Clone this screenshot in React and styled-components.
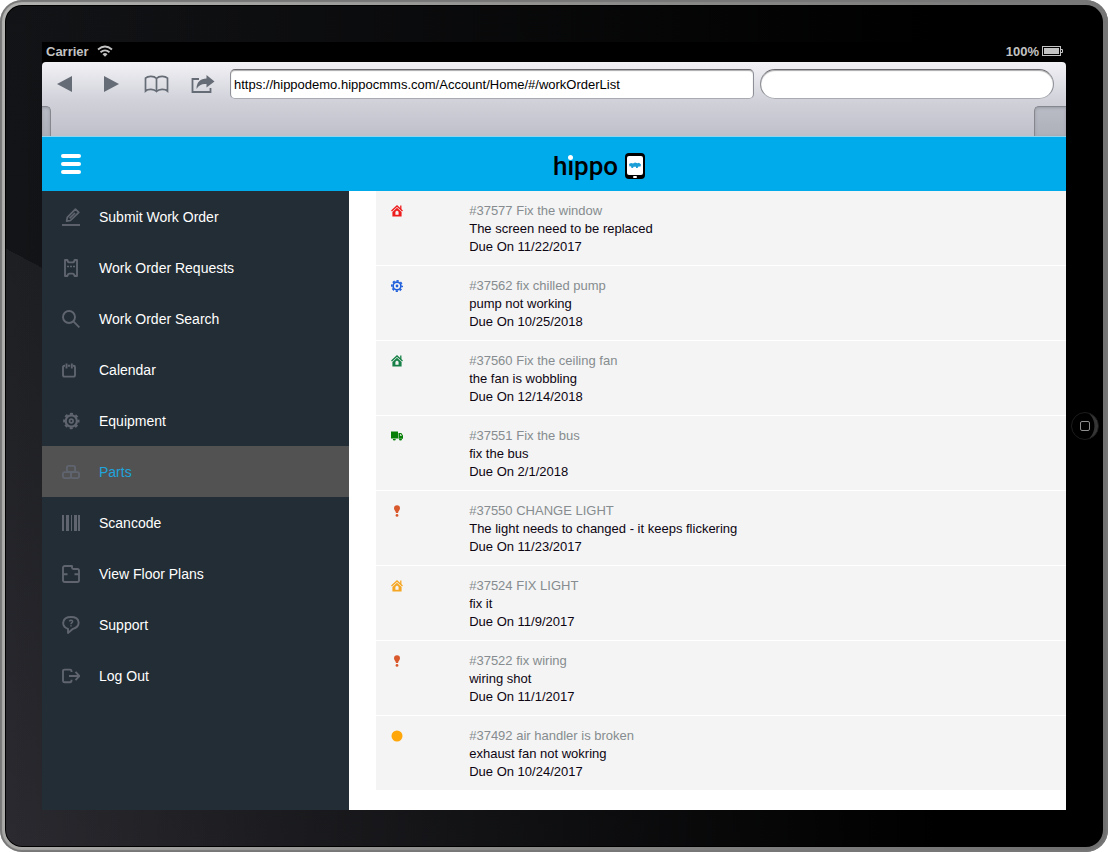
import React from "react";
import styled, { createGlobalStyle } from "styled-components";

const GlobalStyle = createGlobalStyle`
	*,
	*::before,
	*::after {
		box-sizing: border-box;
	}
	body {
		margin: 0;
		background: #fff;
		font-family: "Liberation Sans", Arial, sans-serif;
	}
`;

/* Tablet */

const Frame = styled.div`
	min-height: 100vh;
	display: flex;
	padding: 5px;
	border-radius: 22px;
	background: linear-gradient(100deg, #b2b2b0, #8c8c8b 50%, #6f6f6f);
	box-shadow: inset 0 0 1px 2px #777;
`;

const Bezel = styled.div`
	flex: 1;
	display: grid;
	grid-template-columns: 37px minmax(0, 1fr) 37px;
	grid-template-rows: 37px 1fr 37px;
	border-radius: 17px;
	background: linear-gradient(90deg, transparent, #000 85%),
		linear-gradient(28deg, #2a2a30 0%, #1e1f23 42%, #131417 42%, #111214 100%);
	box-shadow: 0 0 0 1px #000 inset;
`;

const Screen = styled.div`
	grid-area: 2 / 2;
	display: flex;
	flex-direction: column;
	background: #000;
`;

const HomeButton = styled.button`
	grid-area: 2 / 3;
	place-self: center;
	width: 28px;
	height: 28px;
	padding: 0;
	display: grid;
	place-items: center;
	border: 1px solid #1c1c1c;
	border-radius: 50%;
	background: radial-gradient(circle at 20% 50%, #000 68%, #333 72%, #444);

	&::before {
		content: "";
		width: 10px;
		height: 10px;
		border: 1px solid #8f8f8f;
		border-radius: 2px;
	}
`;

const StatusBar = styled.div`
	height: 20px;
	padding: 0 3px 2px 4px;
	display: flex;
	align-items: center;
	justify-content: space-between;
	color: #c3c3c3;
	font-size: 13px;
	font-weight: bold;
`;

const StatusGroup = styled.div`
	display: flex;
	align-items: center;
	gap: ${(props) => props.$gap};
`;

/* Browser */

const Browser = styled.div`
	display: flex;
	flex-direction: column;
	border-radius: 4px 4px 0 0;
	background: linear-gradient(#f2f2f6, #cfd0d8 55%, #bfc0ca);
`;

const Toolbar = styled.div`
	height: 44px;
	padding: 0 12px 0 0;
	display: flex;
	align-items: center;
`;

const ToolButton = styled.button`
	width: 46px;
	height: 30px;
	padding: 0;
	display: grid;
	place-items: center;
	border: 0;
	background: none;
	color: #666c75;
`;

const Fields = styled.div`
	flex: 1;
	display: grid;
	grid-template-columns: 16fr 9fr;
	gap: 6px;
	margin-left: 4px;
`;

const Field = styled.input`
	min-width: 0;
	height: 30px;
	padding: 0 3px;
	border: 1px solid #8d8f96;
	border-top-color: #6b6c71;
	border-bottom-color: #a9abb3;
	border-radius: ${(props) => (props.$round ? "15px" : "5px")};
	background: #fff;
	box-shadow: inset 0 1px 1px #aaa;
	color: #000;
	font: 13px "Liberation Sans", Arial, sans-serif;
`;

const Tabs = styled.div`
	height: 30px;
	display: flex;
	justify-content: space-between;
`;

const Tab = styled.div`
	width: ${(props) => (props.$last ? "32px" : "9px")};
	border: solid #85878f;
	border-width: ${(props) => (props.$last ? "1px 0 0 1px" : "1px 1px 0 0")};
	border-radius: ${(props) => (props.$last ? "5px 0 0 0" : "0 5px 0 0")};
	background: linear-gradient(#b9bbc5, #adafb9);
	box-shadow: inset 0 1px 3px #989aa3;
`;

/* App */

const Header = styled.header`
	height: 55px;
	display: flex;
	align-items: center;
	border-top: 1px solid #8fd5f0;
	background: #00abeb;
`;

const MenuButton = styled.button`
	width: 90px;
	height: 40px;
	padding: 0 0 0 19px;
	display: flex;
	flex-direction: column;
	justify-content: center;
	gap: 4px;
	border: 0;
	background: none;
`;

const Bar = styled.span`
	width: 20px;
	height: 4px;
	border-radius: 2px;
	background: #fff;
`;

const Logo = styled.div`
	flex: 1;
	padding-top: 3px;
	display: flex;
	align-items: center;
	justify-content: center;
	gap: 7px;
`;

const Wordmark = styled.span`
	color: #000;
	font: 500 26px/26px Roboto, sans-serif;
`;

const DottedLetter = styled.span`
	position: relative;

	&::after {
		content: "";
		position: absolute;
		top: 4px;
		left: 1px;
		width: 5px;
		height: 5px;
		border-radius: 50%;
		background: #fff;
		box-shadow: 0 0 0 1px #00abeb;
	}
`;

const Body = styled.div`
	flex: 1;
	display: flex;
`;

const Sidebar = styled.nav`
	width: 30%;
	background: #232d35;
`;

const MenuLink = styled.a`
	height: 51px;
	padding-left: 20px;
	display: flex;
	align-items: center;
	gap: 19px;
	background: ${(props) => (props.$active ? "#525252" : "transparent")};
	color: ${(props) => (props.$active ? "#1fa4dc" : "#fff")};
	font-size: 14px;
	text-decoration: none;

	svg {
		color: #5f646f;
	}
`;

const Content = styled.main`
	flex: 1;
	padding: 0 0 19px 27px;
	background: #fff;
`;

const OrderList = styled.ul`
	margin: 0;
	padding: 0;
	list-style: none;
`;

const Order = styled.li`
	padding: 11px 15px 9px;
	display: grid;
	grid-template-columns: 78px 1fr;
	border-bottom: 1px solid #fff;
	background: #f4f4f4;
	color: #0d0512;
	font-size: 13px;
	line-height: 18px;

	svg {
		margin-top: 3px;
	}
`;

const OrderTitle = styled.a`
	display: block;
	color: #868c8f;
	text-decoration: none;
`;

const OrderText = styled.div``;

/* Drawings */

const LineIcon = ({ children }) => (
	<svg
		width="18"
		height="18"
		viewBox="0 0 18 18"
		fill="none"
		stroke="currentColor"
		strokeWidth="1.9"
		strokeLinejoin="round"
		aria-hidden="true"
	>
		{children}
	</svg>
);

const menuIcons = {
	submit: (
		<>
			<path d="M0 17H18" />
			<path d="M4.6 13.2 5.3 9.4 13.4 1.1 16.8 4.3 8.5 12.5ZM7.6 10.3 13 5" strokeWidth="1.7" />
		</>
	),
	requests: (
		<>
			<path d="M3 1H5.4Q5.8 3.4 7.6 3.4H10.4Q12.2 3.4 12.6 1H15V17H12.6Q12.2 14.6 10.4 14.6H7.6Q5.8 14.6 5.4 17H3Z" />
			<path d="M5 7.5H13" strokeWidth="1.5" strokeDasharray="2 1" />
		</>
	),
	search: (
		<>
			<circle cx="7" cy="7" r="6" />
			<path d="M11.4 11.4 17.4 17.4" />
		</>
	),
	calendar: (
		<>
			<path d="M3 4.8H2.5Q1 4.8 1 6.3V14Q1 15.6 2.6 15.6H11.4Q13 15.6 13 14V6.3Q13 4.8 11.5 4.8H11M5.8 4.8H8.2" />
			<path d="M4.5 2.5V7.5M9.8 2.5V7.5" />
		</>
	),
	equipment: (
		<>
			<circle cx="9.3" cy="9" r="5.6" strokeWidth="2.2" />
			<circle cx="9.3" cy="9" r="7.2" strokeWidth="2" strokeDasharray="3 2.65" strokeDashoffset="1.5" />
			<circle cx="9.3" cy="9" r="1.8" strokeWidth="1.7" />
		</>
	),
	parts: (
		<>
			<rect x="4.9" y="2.9" width="8.2" height="6" rx="1.8" />
			<rect x="0.9" y="9.1" width="8.1" height="6" rx="1.8" />
			<rect x="9" y="9.1" width="8.1" height="6" rx="1.8" />
		</>
	),
	scancode: (
		<g fill="currentColor" stroke="none">
			<rect x="0" y="1" width="2" height="16" />
			<rect x="4" y="1" width="3" height="16" />
			<rect x="9" y="1" width="1" height="16" />
			<rect x="12" y="1" width="3" height="16" />
			<rect x="16" y="1" width="2" height="16" />
		</g>
	),
	plans: (
		<>
			<path d="M3 1H10V2.5Q10 4 11.5 4H15.5Q17 4 17 5.7V15.3Q17 17 15.5 17H2.7Q1 17 1 15.3V2.8Q1 1 3 1Z" />
			<path d="M1 9.3H5.5M12.5 9.3H17" />
		</>
	),
	support: (
		<>
			<path d="M6 17V12.8C-1 10.5-.5 1 9 1S19 10.5 11 12.8Z" />
			<path d="M7.2 5.2Q9 3.4 10.4 4.8C11.4 6.5 9 6.5 9 8.2M9 9.2V10.6" strokeWidth="1.5" />
		</>
	),
	logout: (
		<>
			<path d="M9.5 5V4.2Q9.5 2.6 8 2.6H2.6Q1 2.6 1 4.2V13.6Q1 15.2 2.6 15.2H8Q9.5 15.2 9.5 13.6V12.8" />
			<path d="M7 9H17.4M13.5 4.8 17.4 9 13.5 13.2" strokeLinejoin="miter" />
		</>
	),
};

const orderIcons = {
	house: (
		<>
			<path d="M.5 6 6 .9 11.5 6M9.8 .5V4" fill="none" stroke="currentColor" strokeWidth="1.3" />
			<path fillRule="evenodd" d="M6 2.8 10.6 7V11.6H1.400V7ZM4.400 6.800V9.800H7.600V6.800L6 5.400Z" />
		</>
	),
	gear: (
		<g fill="none" stroke="currentColor">
			<circle cx="6" cy="6" r="3.9" strokeWidth="1.7" />
			<circle cx="6" cy="6" r="5.2" strokeWidth="1.6" strokeDasharray="2.2 1.88" strokeDashoffset="1.1" />
			<circle cx="6" cy="6" r="1.4" fill="currentColor" stroke="none" />
		</g>
	),
	truck: (
		<path
			fillRule="evenodd"
			d="M0 1.5H7V8.5H0ZM7.500 3H10.300L12 5.400V8.800H7.500ZM9 4.200V5.800H11L9.900 4.200ZM1.800 9A1.500 1.500 0 1 0 4.800 9ZM8 9A1.500 1.500 0 1 0 11 9Z"
		/>
	),
	alert: (
		<>
			<path d="M3 3.2A3 3 0 0 1 9 3.2C9 5.200 7.400 5.600 7 8H5C4.600 5.600 3 5.200 3 3.200Z" />
			<circle cx="6" cy="10.4" r="1.4" />
		</>
	),
	dot: <circle cx="6" cy="6" r="5.5" />,
};

const menu = [
	{ icon: "submit", label: "Submit Work Order" },
	{ icon: "requests", label: "Work Order Requests" },
	{ icon: "search", label: "Work Order Search" },
	{ icon: "calendar", label: "Calendar" },
	{ icon: "equipment", label: "Equipment" },
	{ icon: "parts", label: "Parts", active: true },
	{ icon: "scancode", label: "Scancode" },
	{ icon: "plans", label: "View Floor Plans" },
	{ icon: "support", label: "Support" },
	{ icon: "logout", label: "Log Out" },
];

const orders = [
	{ id: 37577, title: "Fix the window", text: "The screen need to be replaced", due: "11/22/2017", icon: "house", color: "#ee1c1c" },
	{ id: 37562, title: "fix chilled pump", text: "pump not working", due: "10/25/2018", icon: "gear", color: "#1f5fdb" },
	{ id: 37560, title: "Fix the ceiling fan", text: "the fan is wobbling", due: "12/14/2018", icon: "house", color: "#178046" },
	{ id: 37551, title: "Fix the bus", text: "fix the bus", due: "2/1/2018", icon: "truck", color: "#088008" },
	{ id: 37550, title: "CHANGE LIGHT", text: "The light needs to changed - it keeps flickering", due: "11/23/2017", icon: "alert", color: "#d9592c" },
	{ id: 37524, title: "FIX LIGHT", text: "fix it", due: "11/9/2017", icon: "house", color: "#f5a623" },
	{ id: 37522, title: "fix wiring", text: "wiring shot", due: "11/1/2017", icon: "alert", color: "#d9592c" },
	{ id: 37492, title: "air handler is broken", text: "exhaust fan not wokring", due: "10/24/2017", icon: "dot", color: "#ffa60a" },
];

const BrowserChrome = () => (
	<Browser>
		<Toolbar>
			<ToolButton aria-label="Back">
				<svg width="16" height="18" fill="currentColor">
					<path d="M0 9 15 1V17Z" />
				</svg>
			</ToolButton>
			<ToolButton aria-label="Forward">
				<svg width="16" height="18" fill="currentColor">
					<path d="M16 9 1 1V17Z" />
				</svg>
			</ToolButton>
			<ToolButton aria-label="Bookmarks">
				<svg width="26" height="18" viewBox="0 0 26 18" fill="none" stroke="currentColor" strokeWidth="1.7">
					<path d="M12.500 3.500C10 .8 4 .8 1.500 3.200V16C4 13.800 10 13.800 12.500 16.500C15 13.800 21 13.800 23.500 16V3.200C21 .8 15 .8 12.500 3.500ZM12.500 3.500V16.500" />
				</svg>
			</ToolButton>
			<ToolButton aria-label="Share">
				<svg width="24" height="20" fill="none" stroke="currentColor" strokeWidth="1.8">
					<path d="M8 5H1.500V18H19.500V14" />
					<path d="M15.500 1 23.500 7.500 15.500 13.500V10C11 9.500 8 11 5.500 15C5.500 8 9.500 4.500 15.500 4.500Z" fill="currentColor" stroke="none" />
				</svg>
			</ToolButton>
			<Fields>
				<Field
					aria-label="Address"
					defaultValue="https://hippodemo.hippocmms.com/Account/Home/#/workOrderList"
				/>
				<Field $round type="search" aria-label="Search" />
			</Fields>
		</Toolbar>
		<Tabs>
			<Tab />
			<Tab $last />
		</Tabs>
	</Browser>
);

export default function App() {
	return (
		<Frame>
			<GlobalStyle />
			<Bezel>
				<Screen>
					<StatusBar>
						<StatusGroup $gap="8px">
							Carrier
							<svg width="16" height="12" fill="none" stroke="currentColor" strokeWidth="1.8" aria-hidden="true">
								<path d="M1 4.500Q8-1.500 15 4.500M3.500 7.300Q8 3.500 12.500 7.300" />
								<path d="M5.500 9.200Q8 7 10.500 9.200L8 11.800Z" fill="currentColor" stroke="none" />
							</svg>
						</StatusGroup>
						<StatusGroup $gap="3px">
							100%
							<svg width="21" height="10" aria-hidden="true">
								<rect x=".5" y=".5" width="18" height="9" fill="none" stroke="currentColor" />
								<rect x="2" y="2" width="15" height="6" fill="currentColor" />
								<path d="M19 3.500H20.500V6.500H19" fill="none" stroke="currentColor" />
							</svg>
						</StatusGroup>
					</StatusBar>
					<BrowserChrome />
					<Header>
						<MenuButton aria-label="Menu">
							<Bar />
							<Bar />
							<Bar />
						</MenuButton>
						<Logo>
							<Wordmark>
								h<DottedLetter>i</DottedLetter>ppo
							</Wordmark>
							<svg width="20" height="26" aria-hidden="true">
								<rect width="20" height="26" rx="4" fill="#000" />
								<rect x="2" y="3" width="16" height="19" rx="2" fill="#fff" />
								<path d="M4 11 6 10 8 10.500 10 9.500 12.500 10.300 14 9.800 16 11.500 15.500 13.500H13.500L12.500 15H11V13.800H8.500L8 15H6.500L6 13.300 4.500 13.500Z" fill="#1c9ed6" />
								<rect x="8" y="23" width="4" height="2" rx="1" fill="#fff" />
							</svg>
						</Logo>
					</Header>
					<Body>
						<Sidebar>
							{menu.map((item) => (
								<MenuLink href="#" key={item.label} $active={item.active}>
									<LineIcon>{menuIcons[item.icon]}</LineIcon>
									{item.label}
								</MenuLink>
							))}
						</Sidebar>
						<Content>
							<OrderList>
								{orders.map((order) => (
									<Order key={order.id}>
										<svg width="12" height="12" color={order.color} fill="currentColor" aria-hidden="true">
											{orderIcons[order.icon]}
										</svg>
										<OrderText>
											<OrderTitle href="#">
												#{order.id} {order.title}
											</OrderTitle>
											<div>{order.text}</div>
											<div>Due On {order.due}</div>
										</OrderText>
									</Order>
								))}
							</OrderList>
						</Content>
					</Body>
				</Screen>
				<HomeButton aria-label="Home" />
			</Bezel>
		</Frame>
	);
}
